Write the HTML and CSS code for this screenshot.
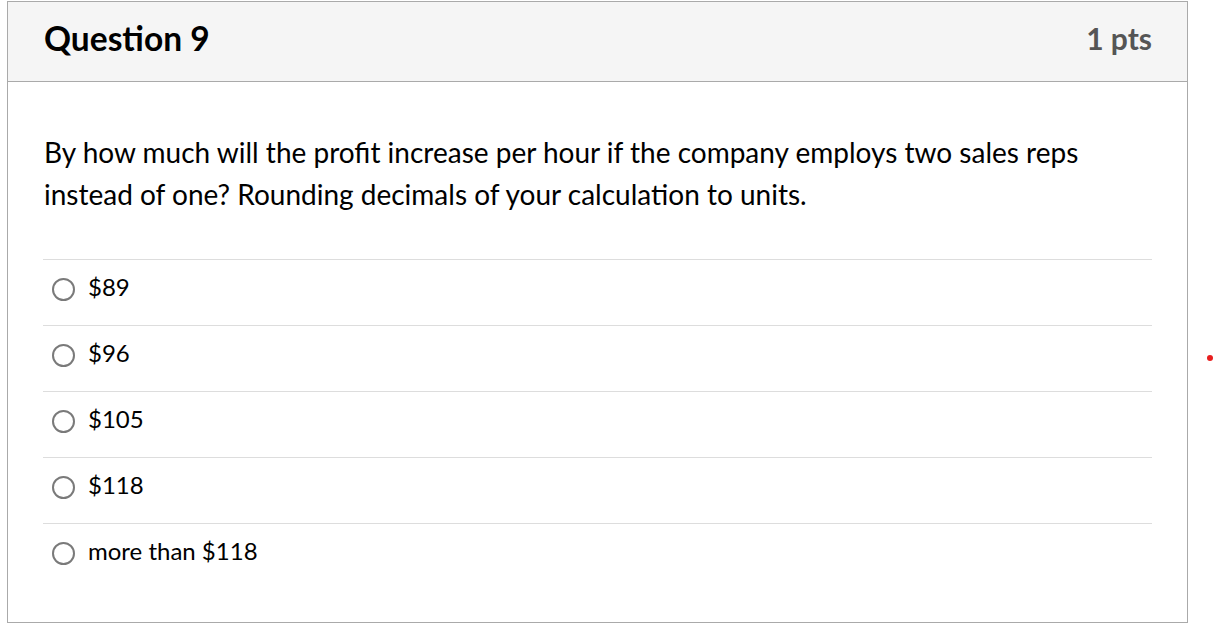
FILE: index.html
```html
<!DOCTYPE html>
<html lang="en">
<head>
<meta charset="utf-8">
<title>Question 9</title>
<link rel="stylesheet" href="styles.css">
</head>
<body>
<div class="question">
  <div class="q-header">
    <h2 class="q-title">Question 9</h2>
    <span class="q-points">1 pts</span>
  </div>
  <div class="q-body">
    <p class="q-text">By how much will the profit increase per hour if the company employs two sales reps instead of one? Rounding decimals of your calculation to units.</p>
    <div class="answers">
      <label class="answer"><span class="radio"></span><span class="answer-text">$89</span></label>
      <label class="answer"><span class="radio"></span><span class="answer-text">$96</span></label>
      <label class="answer"><span class="radio"></span><span class="answer-text">$105</span></label>
      <label class="answer"><span class="radio"></span><span class="answer-text">$118</span></label>
      <label class="answer"><span class="radio"></span><span class="answer-text">more than $118</span></label>
    </div>
  </div>
</div>
<span class="red-dot"></span>
</body>
</html>
```

FILE: styles.css
```css
html, body {
  margin: 0;
  padding: 0;
  background: #ffffff;
}
body {
  font-family: Lato, "Open Sans", "Liberation Sans", sans-serif;
  color: #000;
  position: relative;
  width: 1214px;
  height: 624px;
  overflow: hidden;
}
.question {
  box-sizing: border-box;
  margin: 1px 0 0 7px;
  width: 1181px;
  height: 622px;
  border: 1px solid #aaaaaa;
  display: flex;
  flex-direction: column;
}
.q-header {
  box-sizing: border-box;
  height: 80px;
  background: #f5f5f5;
  border-bottom: 1px solid #aaaaaa;
  display: flex;
  align-items: center;
  justify-content: space-between;
  padding: 0 35px 7px 36px;
}
.q-title {
  margin: 0;
  font-size: 33.5px;
  font-weight: 700;
  color: #000;
}
.q-points {
  font-size: 30px;
  font-weight: 700;
  color: #555555;
}
.q-body {
  padding: 49px 35px 0 35px;
}
.q-text {
  margin: 0 0 44px 1px;
  font-size: 28px;
  line-height: 42px;
}
.answers {
  display: flex;
  flex-direction: column;
}
.answer {
  box-sizing: border-box;
  display: flex;
  align-items: flex-start;
  height: 66px;
  padding-top: 13px;
  border-top: 1px solid #dddddd;
  font-size: 24px;
  line-height: 28.8px;
}
.radio {
  box-sizing: border-box;
  width: 23px;
  height: 23px;
  border: 2px solid #7a7a7a;
  border-radius: 50%;
  margin: 5px 13px 0 9px;
  flex: none;
}
.red-dot {
  position: absolute;
  left: 1207px;
  top: 355px;
  width: 6px;
  height: 6px;
  border-radius: 50%;
  background: #e81e1e;
}
```
